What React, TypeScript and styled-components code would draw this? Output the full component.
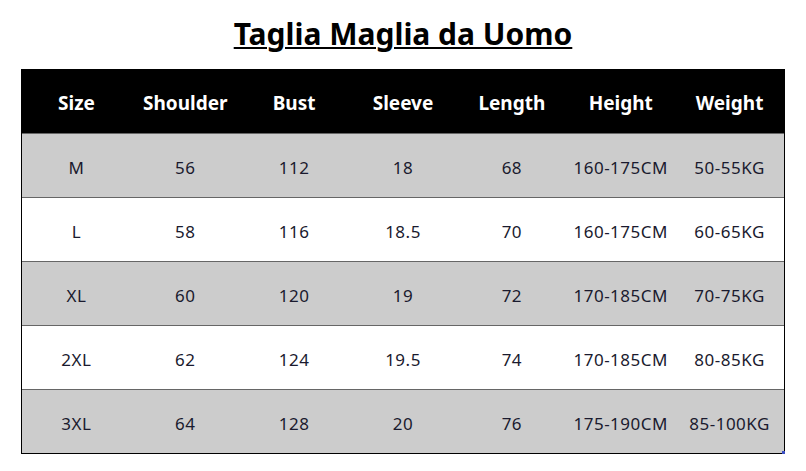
import React from 'react';
import styled, { createGlobalStyle } from 'styled-components';

const GlobalStyle = createGlobalStyle`
  html, body {
    margin: 0;
    padding: 0;
    background: #fff;
  }
  body {
    font-family: 'Noto Sans', 'Open Sans', sans-serif;
  }
`;

const headers = ['Size', 'Shoulder', 'Bust', 'Sleeve', 'Length', 'Height', 'Weight'];

const rows = [
  ['M', '56', '112', '18', '68', '160-175CM', '50-55KG'],
  ['L', '58', '116', '18.5', '70', '160-175CM', '60-65KG'],
  ['XL', '60', '120', '19', '72', '170-185CM', '70-75KG'],
  ['2XL', '62', '124', '19.5', '74', '170-185CM', '80-85KG'],
  ['3XL', '64', '128', '20', '76', '175-190CM', '85-100KG'],
];

const Page = styled.div`
  width: 806px;
  height: 471px;
  display: flex;
  flex-direction: column;
  align-items: center;
  padding-top: 12px;
  box-sizing: border-box;
`;

const Title = styled.h1`
  margin: 0 0 13px;
  font-size: 30px;
  line-height: 44px;
  font-weight: 700;
  color: #000;
  text-decoration: underline;
  text-decoration-thickness: 2px;
  text-underline-offset: 2px;
`;

const Table = styled.div`
  position: relative;
  width: 764px;
  border-left: 1px solid #000;
  border-right: 1px solid #000;
  border-bottom: 1px solid #000;
  box-sizing: border-box;
`;

const Row = styled.div<{ $variant: 'head' | 'gray' | 'white' }>`
  display: grid;
  grid-template-columns: repeat(7, 1fr);
  height: 64px;
  padding-top: 3px;
  align-items: center;
  background: ${({ $variant }) =>
    $variant === 'head' ? '#000' : $variant === 'gray' ? '#cccccc' : '#fff'};
  border-top: ${({ $variant }) => ($variant === 'head' ? 'none' : '1px solid #666')};
  box-sizing: border-box;
`;

const Cell = styled.div<{ $head?: boolean }>`
  text-align: center;
  white-space: nowrap;
  font-size: ${({ $head }) => ($head ? '19px' : '17px')};
  letter-spacing: ${({ $head }) => ($head ? '0' : '0.5px')};
  font-weight: ${({ $head }) => ($head ? 700 : 400)};
  color: ${({ $head }) => ($head ? '#fff' : '#1a1a2e')};
`;

const Corner = styled.span`
  position: absolute;
  right: -1px;
  bottom: -1px;
  width: 3px;
  height: 3px;
  background: #3b4fc4;
`;

const App = () => (
  <Page>
    <GlobalStyle />
    <Title>Taglia Maglia da Uomo</Title>
    <Table>
      <Row $variant="head">
        {headers.map((h) => (
          <Cell key={h} $head>
            {h}
          </Cell>
        ))}
      </Row>
      {rows.map((r, i) => (
        <Row key={r[0]} $variant={i % 2 === 0 ? 'gray' : 'white'}>
          {r.map((v, j) => (
            <Cell key={j}>{v}</Cell>
          ))}
        </Row>
      ))}
      <Corner />
    </Table>
  </Page>
);

export default App;
